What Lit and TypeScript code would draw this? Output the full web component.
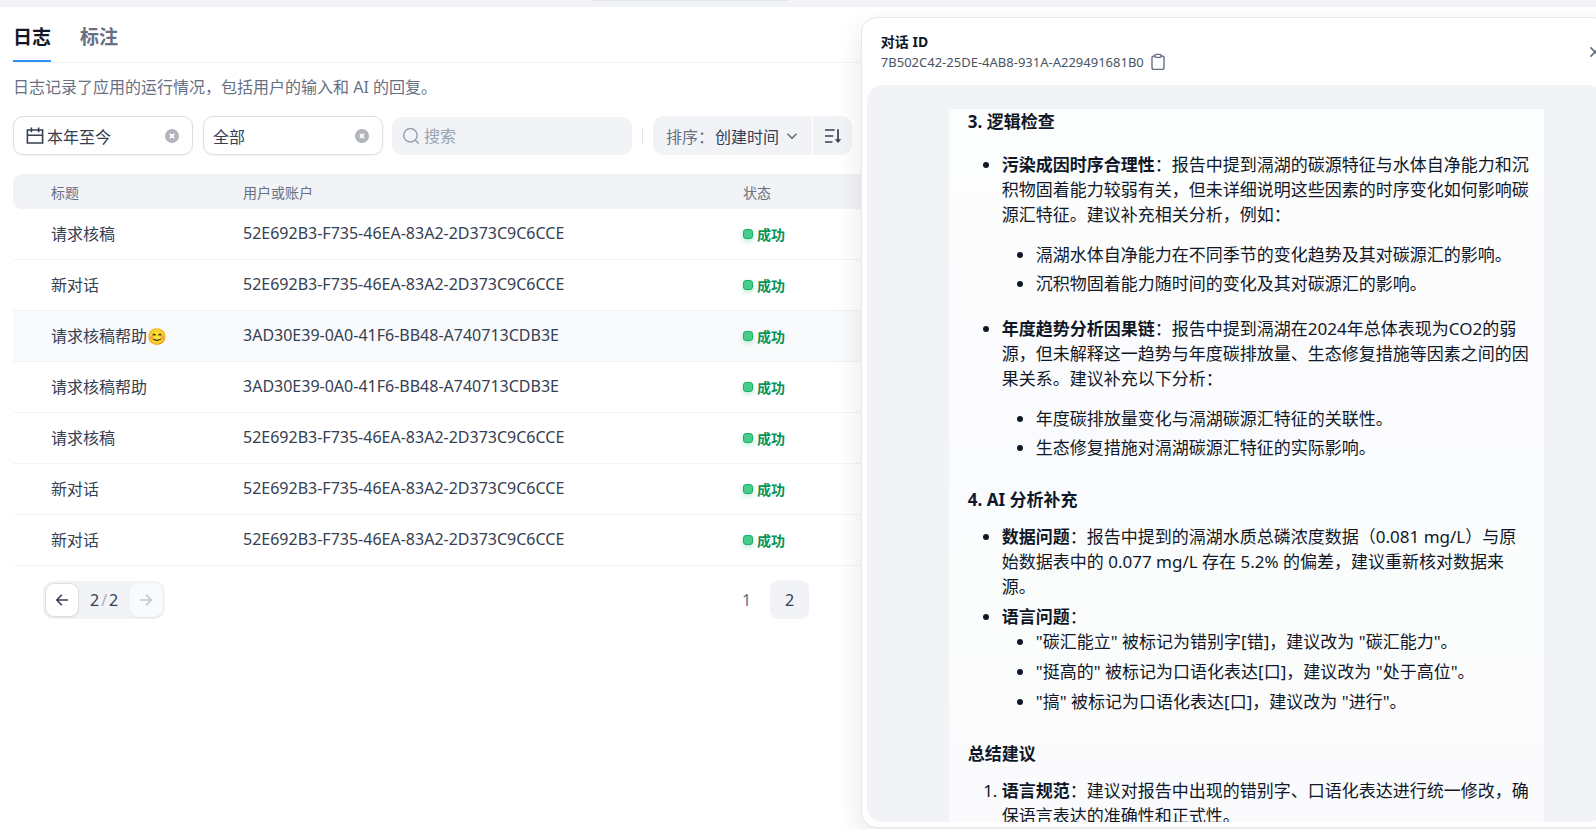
import { LitElement, html, css, svg } from "lit";
import { customElement, state } from "lit/decorators.js";

interface LogRow {
  title: string;
  user: string;
  active?: boolean;
}

const USER_A = "52E692B3-F735-46EA-83A2-2D373C9C6CCE";
const USER_B = "3AD30E39-0A0-41F6-BB48-A740713CDB3E";

const ROWS: LogRow[] = [
  { title: "请求核稿", user: USER_A },
  { title: "新对话", user: USER_A },
  { title: "请求核稿帮助😊", user: USER_B, active: true },
  { title: "请求核稿帮助", user: USER_B },
  { title: "请求核稿", user: USER_A },
  { title: "新对话", user: USER_A },
  { title: "新对话", user: USER_A },
];

const clearIcon = svg`<svg viewBox="0 0 16 16" width="16" height="16"><circle cx="8" cy="8" r="7" fill="#b1b4bb"/><path d="M5.8 5.8l4.4 4.4M10.2 5.8l-4.4 4.4" stroke="#fff" stroke-width="1.7"/></svg>`;

const shared = css`
  * { box-sizing: border-box; }
  svg { display: block; flex: none; }
  button {
    font: inherit;
    color: inherit;
    background: none;
    border: 0;
    padding: 0;
    margin: 0;
    display: flex;
    align-items: center;
    justify-content: center;
  }
`;

@customElement("log-filters")
class LogFilters extends LitElement {
  static styles = [shared, css`
    :host { display: flex; align-items: center; }
    .chip {
      display: flex;
      align-items: center;
      width: 180px;
      height: 39px;
      padding: 0 12px;
      border: 1px solid #dcdee3;
      border-radius: 10px;
      background: #fff;
      box-shadow: 0 1px 2px #1018280d;
      color: #354052;
      margin-right: 10px;
    }
    .chip.plain { padding-left: 9px; margin-right: 9px; }
    .label { flex: 1; text-align: left; padding-left: 3px; }
    .chip.plain .label { padding: 0; }
    .search {
      display: flex;
      align-items: center;
      width: 240px;
      height: 38px;
      padding: 0 10px;
      gap: 4px;
      border-radius: 10px;
      background: #f1f3f7;
    }
    .search input {
      flex: 1;
      min-width: 0;
      border: 0;
      padding: 0;
      outline: 0;
      background: none;
      font: inherit;
      color: #354052;
    }
    .search input::placeholder { color: #98a2b2; }
    .divider { width: 1px; height: 18px; margin: 0 10px; background: #e3e5e9; }
    .sort { display: flex; gap: 1px; height: 39px; }
    .by {
      padding: 0 12px 0 13px;
      border-radius: 10px 0 0 10px;
      background: #f1f3f7;
      color: #676f83;
    }
    .by b { font-weight: 400; color: #354052; padding: 0 5px 0 1px; }
    .dir { width: 39px; border-radius: 0 10px 10px 0; background: #f1f3f7; }
  `];

  render() {
    return html`
      <button class="chip">
        <svg viewBox="0 0 18 18" width="18" height="18" fill="none" stroke="#354052" stroke-width="1.6"><path d="M1.4 3h15.2v13H1.4zM5.4 .6v4.6M12.6 .6v4.6M1.4 8.2h15.2"/></svg>
        <span class="label">本年至今</span>${clearIcon}
      </button>
      <button class="chip plain"><span class="label">全部</span>${clearIcon}</button>
      <label class="search">
        <svg viewBox="0 0 18 18" width="18" height="18" fill="none" stroke="#98a2b2" stroke-width="1.5"><circle cx="8.4" cy="8.2" r="6.7"/><path d="M13.2 13l3.6 3.6"/></svg>
        <input type="text" placeholder="搜索" aria-label="搜索" />
      </label>
      <span class="divider"></span>
      <div class="sort">
        <button class="by">排序：<b>创建时间</b>
          <svg viewBox="0 0 16 16" width="16" height="16" fill="none" stroke="#676f83" stroke-width="1.5"><path d="M3.4 5.8L8 10.4l4.6-4.6"/></svg>
        </button>
        <button class="dir" aria-label="降序">
          <svg viewBox="0 0 18 18" width="18" height="18" fill="none" stroke="#354052" stroke-width="1.7"><path d="M1 3h9.6M1 9h8.2M1 15h7.4M14 2.2v11.4"/><path d="M10.8 12.2h6.4L14 16z" fill="#354052" stroke="none"/></svg>
        </button>
      </div>`;
  }
}

@customElement("log-table")
class LogTable extends LitElement {
  static styles = [shared, css`
    :host { display: block; }
    table {
      width: 100%;
      border-collapse: separate;
      border-spacing: 0;
      table-layout: fixed;
      text-align: left;
    }
    .c-title { width: 192px; }
    .c-user { width: 500px; }
    th {
      height: 35px;
      padding: 1px 0 0 38px;
      background: #f1f3f7;
      font-weight: 400;
      font-size: 14px;
      color: #676f83;
    }
    th:first-child { border-radius: 9px 0 0 9px; }
    td {
      height: 51px;
      padding: 0 0 2px 38px;
      border-bottom: 1px solid #f2f3f5;
      color: #354052;
      white-space: nowrap;
    }
    .active td { background: #f9fafb; }
    .status {
      display: flex;
      align-items: center;
      gap: 4px;
      padding-top: 1px;
      font-size: 14px;
      font-weight: 700;
      color: #079455;
    }
    .dot {
      width: 10px;
      height: 10px;
      border: 1px solid #17b26a;
      border-radius: 3px;
      background: #47cd89;
      box-shadow: 0 2px 5px #17b26a4d;
    }
  `];

  render() {
    return html`
      <table>
        <colgroup><col class="c-title" /><col class="c-user" /><col /></colgroup>
        <thead><tr><th>标题</th><th>用户或账户</th><th>状态</th></tr></thead>
        <tbody>
          ${ROWS.map((r) => html`
            <tr class=${r.active ? "active" : ""}>
              <td>${r.title}</td>
              <td>${r.user}</td>
              <td><span class="status"><i class="dot"></i>成功</span></td>
            </tr>`)}
        </tbody>
      </table>`;
  }
}

@customElement("log-pager")
class LogPager extends LitElement {
  static styles = [shared, css`
    :host {
      display: flex;
      align-items: center;
      justify-content: space-between;
      width: 766px;
      margin-left: 30px;
      color: #354052;
    }
    .steps {
      display: flex;
      align-items: center;
      padding: 2px;
      border-radius: 11px;
      background: #f1f3f7;
    }
    .step {
      width: 34px;
      height: 34px;
      border: 1px solid #dcdee3;
      border-radius: 9px;
      background: #fff;
      box-shadow: 0 1px 2px #1018280d;
    }
    .step:disabled { border-color: #f6f7f9; background: #f9fafb; }
    .count { display: flex; gap: 2px; padding: 0 11px; }
    .count i { font-style: normal; color: #a9b0bd; }
    .pages { display: flex; }
    .page { width: 39px; height: 39px; border-radius: 9px; color: #676f83; }
    .page + .page { margin-left: 4px; }
    .page.on { background: #f1f3f7; color: #354052; }
  `];

  render() {
    return html`
      <div class="steps">
        <button class="step" aria-label="上一页">
          <svg viewBox="0 0 16 16" width="16" height="16" fill="none" stroke="#354052" stroke-width="1.6"><path d="M14 8H3M8 2.8L2.8 8 8 13.2"/></svg>
        </button>
        <span class="count">2<i>/</i>2</span>
        <button class="step" disabled aria-label="下一页">
          <svg viewBox="0 0 16 16" width="16" height="16" fill="none" stroke="#bfc3cb" stroke-width="1.5"><path d="M2 8h11M8 2.8L13.2 8 8 13.2"/></svg>
        </button>
      </div>
      <div class="pages">
        <button class="page">1</button>
        <button class="page on">2</button>
      </div>`;
  }
}

@customElement("conversation-drawer")
class ConversationDrawer extends LitElement {
  static styles = [shared, css`
    :host {
      display: flex;
      flex-direction: column;
      padding: 0 5px 5px;
      border: 1px solid #e6e8ec;
      border-radius: 16px;
      background: #fff;
      box-shadow: 0 10px 28px #1018281a;
    }
    header {
      display: flex;
      align-items: center;
      justify-content: space-between;
      height: 67px;
      padding-left: 14px;
    }
    h2 { margin: 0; font-size: 14px; line-height: 20px; color: #101828; }
    .id {
      display: flex;
      align-items: center;
      gap: 6px;
      font-size: 13px;
      line-height: 20px;
      color: #495464;
    }
    .body {
      flex: 1;
      min-height: 0;
      overflow: hidden;
      padding: 24px 60px 0 82px;
      border-radius: 16px;
      background: #f1f3f7;
    }
    .answer {
      padding: 0 14px 24px 19px;
      background: linear-gradient(#fcfefd, #fcfcfd 18%, #fafbfe 50%, #fbfdfc 65%, #fbfbfc 82%, #f9fafd);
      font-size: 17px;
      line-height: 25px;
      color: #101828;
    }
    h3 { margin: 0; font-size: 17px; line-height: 25px; }
    ul, ol { margin: 0; padding-left: 34px; }
    ul { list-style: disc; }
    p { margin: 0; }
    .loose { margin-top: 18px; }
    .loose > li + li { margin-top: 20px; }
    .loose ul { margin-top: 15px; }
    .loose ul li + li { margin-top: 4px; }
    .tight { margin-top: 12px; }
    .tight li + li { margin-top: 5px; }
    .next { margin-top: 27px; }
  `];

  render() {
    return html`
      <header>
        <div>
          <h2>对话 ID</h2>
          <div class="id">7B502C42-25DE-4AB8-931A-A229491681B0
            <button aria-label="复制">
              <svg viewBox="0 0 16 18" width="16" height="18" fill="none" stroke="#676f83" stroke-width="1.4"><rect x="2" y="3" width="12" height="13.4" rx="2"/><rect x="5" y="1.4" width="6" height="3" rx="1" fill="#fff"/></svg>
            </button>
          </div>
        </div>
        <button aria-label="关闭">
          <svg viewBox="0 0 18 18" width="18" height="18" fill="none" stroke="#676f83" stroke-width="1.6"><path d="M4.4 4.4l9.2 9.2M13.6 4.4l-9.2 9.2"/></svg>
        </button>
      </header>
      <div class="body">
        <article class="answer">
          <h3>3. 逻辑检查</h3>
          <ul class="loose">
            <li>
              <p><strong>污染成因时序合理性</strong>：报告中提到滆湖的碳源特征与水体自净能力和沉积物固着能力较弱有关，但未详细说明这些因素的时序变化如何影响碳源汇特征。建议补充相关分析，例如：</p>
              <ul>
                <li>滆湖水体自净能力在不同季节的变化趋势及其对碳源汇的影响。</li>
                <li>沉积物固着能力随时间的变化及其对碳源汇的影响。</li>
              </ul>
            </li>
            <li>
              <p><strong>年度趋势分析因果链</strong>：报告中提到滆湖在2024年总体表现为CO2的弱源，但未解释这一趋势与年度碳排放量、生态修复措施等因素之间的因果关系。建议补充以下分析：</p>
              <ul>
                <li>年度碳排放量变化与滆湖碳源汇特征的关联性。</li>
                <li>生态修复措施对滆湖碳源汇特征的实际影响。</li>
              </ul>
            </li>
          </ul>
          <h3 class="next">4. AI 分析补充</h3>
          <ul class="tight">
            <li><strong>数据问题</strong>：报告中提到的滆湖水质总磷浓度数据（0.081 mg/L）与原始数据表中的 0.077 mg/L 存在 5.2% 的偏差，建议重新核对数据来源。</li>
            <li><strong>语言问题</strong>：
              <ul>
                <li>"碳汇能立" 被标记为错别字[错]，建议改为 "碳汇能力"。</li>
                <li>"挺高的" 被标记为口语化表达[口]，建议改为 "处于高位"。</li>
                <li>"搞" 被标记为口语化表达[口]，建议改为 "进行"。</li>
              </ul>
            </li>
          </ul>
          <h3 class="next">总结建议</h3>
          <ol class="tight">
            <li><strong>语言规范</strong>：建议对报告中出现的错别字、口语化表达进行统一修改，确保语言表达的准确性和正式性。</li>
          </ol>
        </article>
      </div>`;
  }
}

@customElement("app-root")
class AppRoot extends LitElement {
  static styles = [shared, css`
    :host {
      display: block;
      box-sizing: border-box;
      position: relative;
      height: 100vh;
      overflow: hidden;
      background: #fff;
      font-family: "Noto Sans", "Noto Sans CJK SC", sans-serif;
      font-size: 16px;
      color: #354052;
    }
    .strip { height: 7px; overflow: hidden; background: #f1f3f7; }
    .strip::before {
      content: "";
      display: block;
      width: 200px;
      height: 10px;
      margin: -10px 0 0 590px;
      border-radius: 8px;
      box-shadow: 0 1px 2px #10182814;
    }
    main { padding-left: 13px; }
    nav {
      display: flex;
      gap: 29px;
      height: 56px;
      border-bottom: 1px solid #f2f3f5;
      font-size: 19px;
      font-weight: 700;
    }
    nav a {
      height: 55px;
      padding-top: 3px;
      line-height: 54px;
      text-decoration: none;
      color: #676f83;
    }
    nav a.on { color: #101828; border-bottom: 2px solid #2e90fa; }
    .intro { margin: 0; padding: 12px 0 17px; line-height: 24px; color: #676f83; }
    log-table { margin-top: 19px; }
    log-pager { margin-top: 14px; }
    conversation-drawer {
      position: absolute;
      top: 17px;
      bottom: 1px;
      left: calc(54% - 1px);
      right: -14px;
    }
  `];

  @state() tab = "日志";

  render() {
    return html`
      <div class="strip"></div>
      <main>
        <nav>
          ${["日志", "标注"].map((t) => html`<a href="#" class=${t === this.tab ? "on" : ""}>${t}</a>`)}
        </nav>
        <p class="intro">日志记录了应用的运行情况，包括用户的输入和 AI 的回复。</p>
        <log-filters></log-filters>
        <log-table></log-table>
        <log-pager></log-pager>
      </main>
      <conversation-drawer></conversation-drawer>`;
  }
}
